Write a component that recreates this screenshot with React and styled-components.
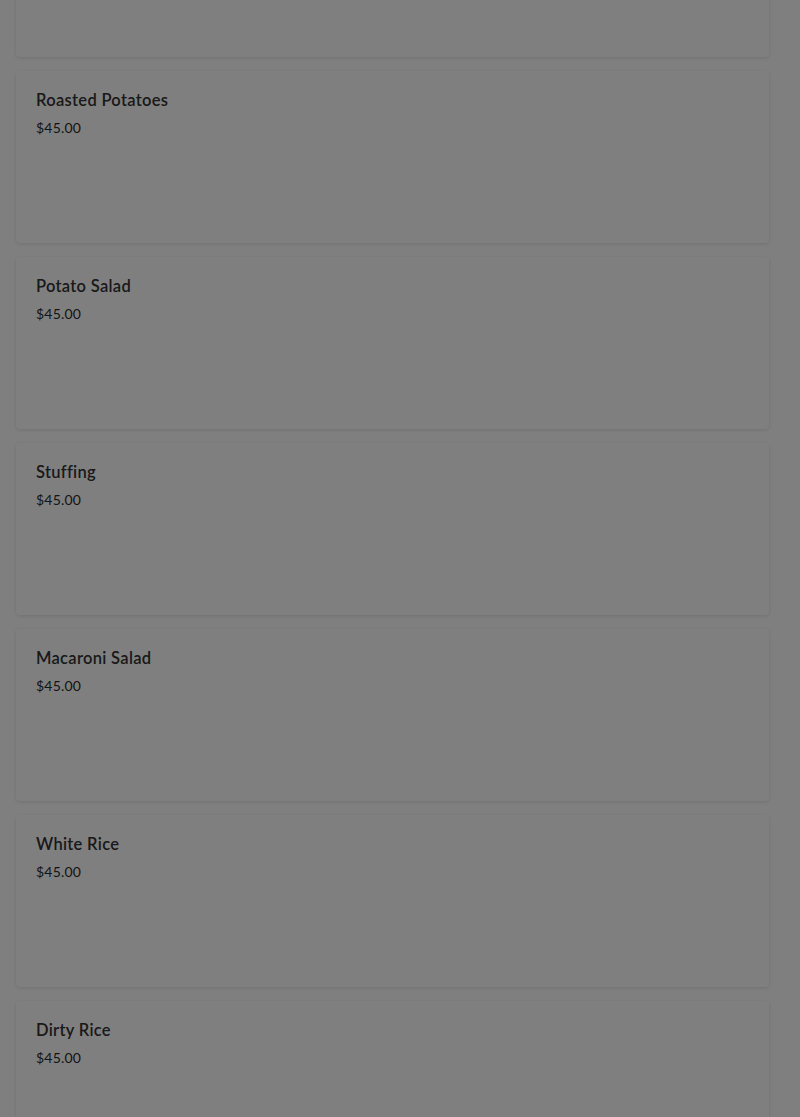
import styled, { createGlobalStyle } from "styled-components";

const GlobalStyle = createGlobalStyle`
  html, body {
    margin: 0;
    padding: 0;
    background: #ffffff;
    overflow: hidden;
  }
`;

const Page = styled.div`
  height: 1117px;
  overflow: hidden;
  font-family: "Lato", "Liberation Sans", sans-serif;
  font-variant-ligatures: none;
  color: #2b2b2b;
`;

const List = styled.div`
  display: flex;
  flex-direction: column;
  gap: 14px;
  padding: 0 31px 0 16px;
  margin-top: -115px;
`;

const Card = styled.div`
  height: 172px;
  box-sizing: border-box;
  padding: 18px 20px;
  background: #ffffff;
  border-radius: 4px;
  box-shadow: 0 1px 4px rgba(0, 0, 0, 0.12);
`;

const Title = styled.div`
  font-size: 16.5px;
  font-weight: 600;
  letter-spacing: 0.3px;
  line-height: 22px;
  color: #333333;
`;

const Price = styled.div`
  margin-top: 7px;
  font-size: 14px;
  letter-spacing: 0.2px;
  line-height: 20px;
`;

const Overlay = styled.div`
  position: fixed;
  inset: 0;
  background: rgba(0, 0, 0, 0.5);
`;

const items = [
  "Roasted Potatoes",
  "Potato Salad",
  "Stuffing",
  "Macaroni Salad",
  "White Rice",
  "Dirty Rice",
];

export default function App() {
  return (
    <Page>
      <GlobalStyle />
      <List>
        <Card />
        {items.map((name) => (
          <Card key={name}>
            <Title>{name}</Title>
            <Price>$45.00</Price>
          </Card>
        ))}
      </List>
      <Overlay />
    </Page>
  );
}
